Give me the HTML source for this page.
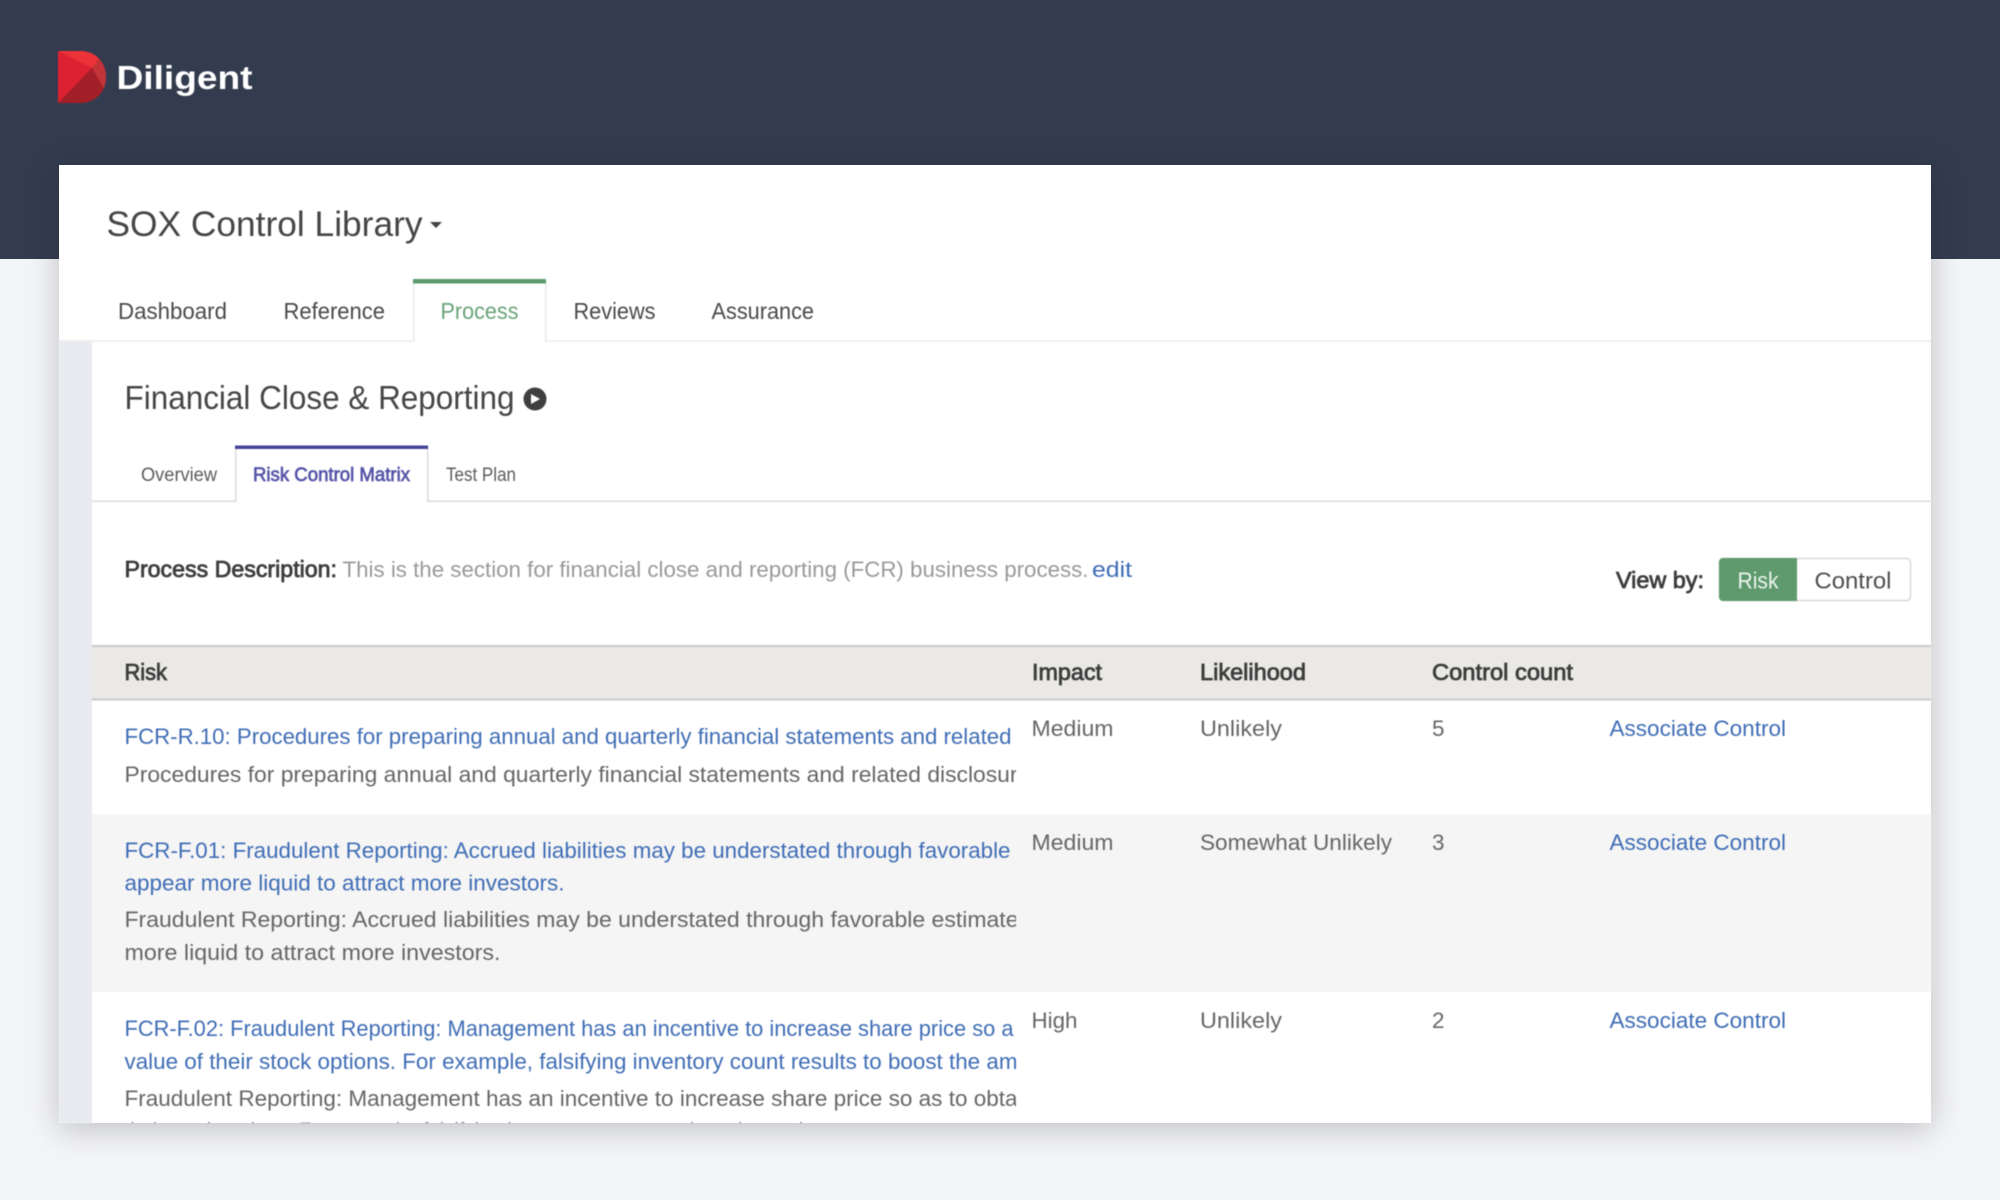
<!DOCTYPE html>
<html lang="en">
<head>
<meta charset="utf-8">
<title>Diligent SOX Control Library</title>
<style>
html,body{margin:0;padding:0;width:2000px;height:1200px;overflow:hidden;background:#F4F5F7}
#hdr{position:absolute;left:0;top:0;width:2000px;height:259px;background:#333C4E}
#card{position:absolute;left:59px;top:165px;width:1872px;height:958px;background:#fff;box-shadow:0 6px 30px rgba(20,25,35,.24)}
svg{position:absolute;left:0;top:0;filter:blur(.45px)}
text{font-family:"Liberation Sans",sans-serif;white-space:pre}
.n{font-size:23px;fill:#4a4a4a}
.t{font-size:22.5px;fill:#666}
.l{font-size:22.5px;fill:#3F6DB5}
.h{font-size:23px;fill:#3d3d3d;stroke:#3d3d3d;stroke-width:.8px}
</style>
</head>
<body>
<div id="hdr"></div>
<div id="card"></div>
<svg width="2000" height="1200" viewBox="0 0 2000 1200" xmlns="http://www.w3.org/2000/svg">
<defs>
<clipPath id="d"><path d="M58 51H80C96 51 106 63 106 77C106 91 96 103 80 103H67L58 103Z"/></clipPath>
<clipPath id="cellclip"><rect x="92" y="700" width="924" height="423"/></clipPath>
</defs>

<g clip-path="url(#d)">
<rect x="58" y="51" width="48" height="52" fill="#DC2232"/>
<polygon points="58,51 100,51 101,58 92,68" fill="#EE3338"/>
<polygon points="92,68 100,57 110,60 110,88 103,87" fill="#C33438"/>
<polygon points="58,103 92,68 103,87 110,104" fill="#A31F27"/>
</g>
<text x="116.5" y="89" font-size="33" font-weight="700" fill="#fff" textLength="136" lengthAdjust="spacingAndGlyphs">Diligent</text>

<text x="106.5" y="236" font-size="35" fill="#454545" textLength="316" lengthAdjust="spacingAndGlyphs">SOX Control Library</text>
<polygon points="430,222 442,222 436,228" fill="#444"/>

<rect x="59" y="340" width="354" height="2" fill="#EEEEEE"/>
<rect x="546" y="340" width="1385" height="2" fill="#EEEEEE"/>
<rect x="413" y="283" width="1.5" height="59" fill="#EAEAEA"/>
<rect x="545" y="283" width="1.5" height="59" fill="#EAEAEA"/>
<rect x="413" y="279" width="133" height="4.5" fill="#5C9C6C"/>
<text class="n" x="118" y="319" textLength="109" lengthAdjust="spacingAndGlyphs">Dashboard</text>
<text class="n" x="283.5" y="319" textLength="101.5" lengthAdjust="spacingAndGlyphs">Reference</text>
<text class="n" x="440.5" y="319" textLength="78" lengthAdjust="spacingAndGlyphs" style="fill:#6AA37A">Process</text>
<text class="n" x="573.5" y="319" textLength="82" lengthAdjust="spacingAndGlyphs">Reviews</text>
<text class="n" x="711.5" y="319" textLength="102.5" lengthAdjust="spacingAndGlyphs">Assurance</text>

<rect x="59" y="342" width="33" height="781" fill="#E8EAF0"/>

<text x="124.5" y="409" font-size="33" fill="#454545" textLength="390" lengthAdjust="spacingAndGlyphs">Financial Close &amp; Reporting</text>
<circle cx="535" cy="399" r="11.5" fill="#3f3f3f"/>
<polygon points="531,394 531,404 540,399" fill="#fff"/>

<rect x="92" y="500.5" width="143" height="1.5" fill="#DADADA"/>
<rect x="428" y="500.5" width="1503" height="1.5" fill="#DADADA"/>
<rect x="235" y="446" width="1.5" height="56" fill="#DADADA"/>
<rect x="427" y="446" width="1.5" height="56" fill="#DADADA"/>
<rect x="235" y="445.5" width="193" height="3.5" fill="#45459A"/>
<text x="141" y="481" font-size="19" fill="#5c5c5c" textLength="76" lengthAdjust="spacingAndGlyphs">Overview</text>
<text x="253" y="481" font-size="19" fill="#5555A8" stroke="#5555A8" stroke-width=".7" textLength="157" lengthAdjust="spacingAndGlyphs">Risk Control Matrix</text>
<text x="446" y="481" font-size="19" fill="#5c5c5c" textLength="70" lengthAdjust="spacingAndGlyphs">Test Plan</text>

<text class="h" x="124.5" y="577" textLength="212.5" lengthAdjust="spacingAndGlyphs">Process Description:</text>
<text x="342.5" y="577" font-size="22.5" fill="#999" textLength="746" lengthAdjust="spacingAndGlyphs">This is the section for financial close and reporting (FCR) business process.</text>
<text x="1092" y="577" font-size="22.5" fill="#3F6DB5" textLength="40" lengthAdjust="spacingAndGlyphs">edit</text>

<text class="h" x="1616" y="588" textLength="88" lengthAdjust="spacingAndGlyphs">View by:</text>
<rect x="1719.5" y="558.5" width="191" height="42" rx="4" fill="#fff" stroke="#D8D8D8" stroke-width="1.5"/>
<path d="M1723 558H1797V601H1723A4 4 0 0 1 1719 597V562A4 4 0 0 1 1723 558Z" fill="#5E9A6D"/>
<text x="1737.5" y="588.5" font-size="23" fill="#EDF4EF" textLength="41" lengthAdjust="spacingAndGlyphs">Risk</text>
<text x="1814.5" y="588.5" font-size="23" fill="#4d4d4d" textLength="77" lengthAdjust="spacingAndGlyphs">Control</text>

<rect x="92" y="645" width="1839" height="55" fill="#EAE9E6"/>
<rect x="92" y="645" width="1839" height="2" fill="#C9C9C9"/>
<rect x="92" y="698.5" width="1839" height="2" fill="#C9C9C9"/>
<text class="h" x="124.5" y="680" textLength="42.5" lengthAdjust="spacingAndGlyphs">Risk</text>
<text class="h" x="1032" y="680" textLength="70" lengthAdjust="spacingAndGlyphs">Impact</text>
<text class="h" x="1200" y="680" textLength="106" lengthAdjust="spacingAndGlyphs">Likelihood</text>
<text class="h" x="1432" y="680" textLength="141" lengthAdjust="spacingAndGlyphs">Control count</text>

<rect x="92" y="814" width="1839" height="178" fill="#F5F5F5"/>

<g clip-path="url(#cellclip)">
<text class="l" x="124.5" y="744" textLength="887" lengthAdjust="spacingAndGlyphs">FCR-R.10: Procedures for preparing annual and quarterly financial statements and related</text>
<text class="t" x="124.5" y="782" textLength="893" lengthAdjust="spacingAndGlyphs">Procedures for preparing annual and quarterly financial statements and related disclosur</text>

<text class="l" x="124.5" y="858" textLength="886" lengthAdjust="spacingAndGlyphs">FCR-F.01: Fraudulent Reporting: Accrued liabilities may be understated through favorable</text>
<text class="l" x="124.5" y="890.5" textLength="440" lengthAdjust="spacingAndGlyphs">appear more liquid to attract more investors.</text>
<text class="t" x="124.5" y="927" textLength="894" lengthAdjust="spacingAndGlyphs">Fraudulent Reporting: Accrued liabilities may be understated through favorable estimate</text>
<text class="t" x="124.5" y="960" textLength="376" lengthAdjust="spacingAndGlyphs">more liquid to attract more investors.</text>

<text class="l" x="124.5" y="1036" textLength="889" lengthAdjust="spacingAndGlyphs">FCR-F.02: Fraudulent Reporting: Management has an incentive to increase share price so a</text>
<text class="l" x="124.5" y="1069" textLength="893" lengthAdjust="spacingAndGlyphs">value of their stock options. For example, falsifying inventory count results to boost the am</text>
<text class="t" x="124.5" y="1106" textLength="893" lengthAdjust="spacingAndGlyphs">Fraudulent Reporting: Management has an incentive to increase share price so as to obta</text>
<text class="t" x="124.5" y="1138" textLength="770" lengthAdjust="spacingAndGlyphs">their stock options. For example, falsifying inventory count results to boost the amount</text>
</g>

<text class="t" x="1031.5" y="736" textLength="82" lengthAdjust="spacingAndGlyphs">Medium</text>
<text class="t" x="1200" y="736" textLength="82" lengthAdjust="spacingAndGlyphs">Unlikely</text>
<text class="t" x="1432" y="736">5</text>
<text class="l" x="1609.5" y="736" textLength="176.5" lengthAdjust="spacingAndGlyphs">Associate Control</text>

<text class="t" x="1031.5" y="850" textLength="82" lengthAdjust="spacingAndGlyphs">Medium</text>
<text class="t" x="1200" y="850" textLength="192" lengthAdjust="spacingAndGlyphs">Somewhat Unlikely</text>
<text class="t" x="1432" y="850">3</text>
<text class="l" x="1609.5" y="850" textLength="176.5" lengthAdjust="spacingAndGlyphs">Associate Control</text>

<text class="t" x="1031.5" y="1028" textLength="46" lengthAdjust="spacingAndGlyphs">High</text>
<text class="t" x="1200" y="1028" textLength="82" lengthAdjust="spacingAndGlyphs">Unlikely</text>
<text class="t" x="1432" y="1028">2</text>
<text class="l" x="1609.5" y="1028" textLength="176.5" lengthAdjust="spacingAndGlyphs">Associate Control</text>
</svg>
</body>
</html>
